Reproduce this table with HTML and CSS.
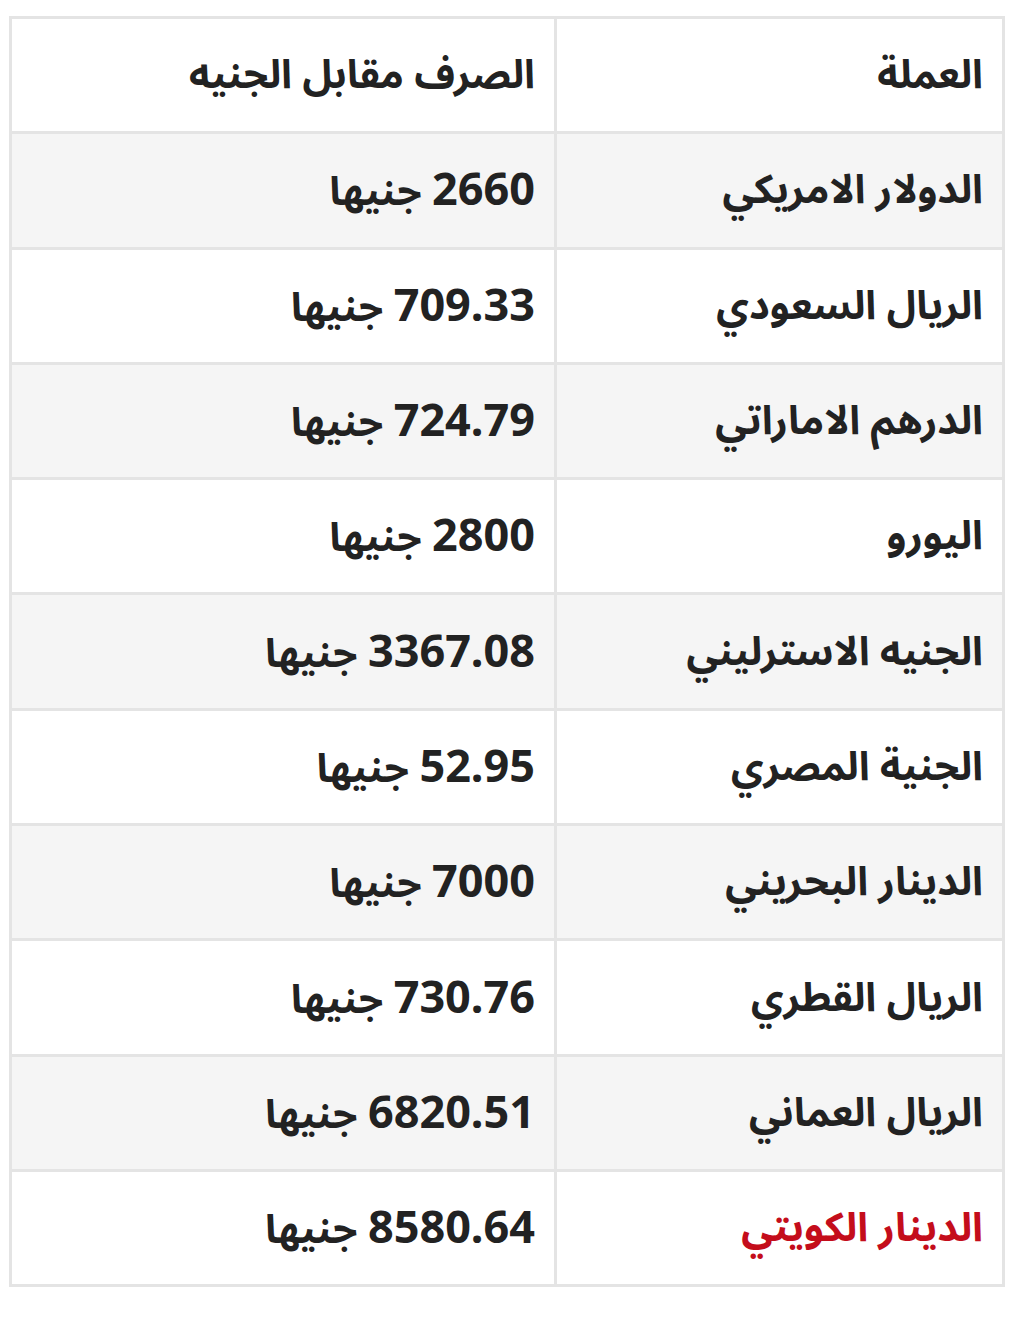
FILE: index.html
```html
<!DOCTYPE html>
<html lang="ar" dir="rtl">
<head>
<meta charset="utf-8">
<link rel="stylesheet" href="styles.css">
</head>
<body>
<table class="rates">
  <tr class="head"><td class="cur">العملة</td><td class="val">الصرف مقابل الجنيه</td></tr>
  <tr class="alt"><td class="cur">الدولار الامريكي</td><td class="val"><span class="num">2660</span> جنيها</td></tr>
  <tr><td class="cur">الريال السعودي</td><td class="val"><span class="num">709.33</span> جنيها</td></tr>
  <tr class="alt"><td class="cur">الدرهم الاماراتي</td><td class="val"><span class="num">724.79</span> جنيها</td></tr>
  <tr><td class="cur">اليورو</td><td class="val"><span class="num">2800</span> جنيها</td></tr>
  <tr class="alt"><td class="cur">الجنيه الاسترليني</td><td class="val"><span class="num">3367.08</span> جنيها</td></tr>
  <tr><td class="cur">الجنية المصري</td><td class="val"><span class="num">52.95</span> جنيها</td></tr>
  <tr class="alt"><td class="cur">الدينار البحريني</td><td class="val"><span class="num">7000</span> جنيها</td></tr>
  <tr><td class="cur">الريال القطري</td><td class="val"><span class="num">730.76</span> جنيها</td></tr>
  <tr class="alt"><td class="cur">الريال العماني</td><td class="val"><span class="num">6820.51</span> جنيها</td></tr>
  <tr><td class="cur red">الدينار الكويتي</td><td class="val"><span class="num">8580.64</span> جنيها</td></tr>
</table>
</body>
</html>
```

FILE: styles.css
```css
html, body {
  margin: 0;
  padding: 0;
  background: #ffffff;
}
body {
  padding: 16px 24px 0 9px;
  font-family: "Noto Sans", "Noto Sans Arabic", "DejaVu Sans", sans-serif;
  color: #222222;
}
.rates {
  width: 996px;
  border-collapse: collapse;
}
.rates td {
  border: 3px solid #e4e4e4;
  height: 108.3px;
  padding: 0 19px 4px 18px;
  font-size: 40px;
  font-weight: bold;
  line-height: 1.2;
  text-align: right;
  vertical-align: middle;
}
.rates .num {
  font-size: 45px;
}
.rates td.cur {
  width: 408px;
}
.rates tr.alt td {
  background: #f5f5f5;
}
.rates td.red {
  color: #c40d1b;
}
```
